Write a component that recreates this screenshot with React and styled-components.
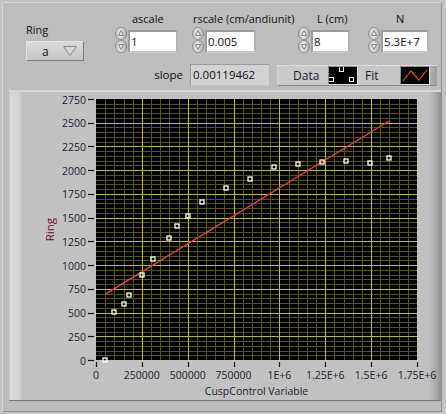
import React from "react";
import styled, { createGlobalStyle } from "styled-components";

const GlobalStyle = createGlobalStyle`
  html, body { margin: 0; padding: 0; background: #bdbdbd; }
  body {
    font-family: "Open Sans", "Noto Sans", sans-serif;
    font-size: 11px;
    color: #111;
  }
`;

// outer window
const Panel = styled.div`
  width: 446px;
  height: 414px;
  box-sizing: border-box;
  padding: 2px 4px 2px 2px;
  background: #c4c4c4;
`;

const Frame = styled.div`
  height: 100%;
  box-sizing: border-box;
  border: 1px solid;
  border-color: #d6d6d6 #8e8e8e #8e8e8e #d6d6d6;
  background: #bdbdbd;
  display: flex;
  flex-direction: column;
`;

// top controls
const ControlsRow = styled.div`
  display: flex;
  align-items: flex-start;
  height: 58px;
  flex: none;
`;

const RingGroup = styled.div`
  flex: none;
  margin: 19px 0 0 23px;
  width: 58px;
`;

const Label = styled.div`
  height: 16px;
  line-height: 16px;
  white-space: nowrap;
  padding-left: ${(p) => p.$indent || 0}px;
`;

const Dropdown = styled.div`
  margin-top: 3px;
  height: 20px;
  box-sizing: border-box;
  border: 1px solid;
  border-color: #e6e6e6 #7c7c7c #7c7c7c #e2e2e2;
  background: linear-gradient(#d9d9d9, #c6c6c6);
  display: flex;
  align-items: center;
  padding-left: 15px;
  font-size: 12px;
  svg { margin-left: 14px; }
`;

const NumGroup = styled.div`
  flex: none;
  width: ${(p) => p.$w}px;
  margin: 8px 0 0 ${(p) => p.$gap}px;
  display: flex;
  flex-direction: column;
`;

const ControlLine = styled.div`
  display: flex;
  align-items: flex-end;
  gap: 1px;
`;

const NumBox = styled.div`
  width: ${(p) => p.$w}px;
  height: 23px;
  box-sizing: border-box;
  border: 2px solid;
  border-color: #9c9c9c #b4b4b4 #c8c8c8 #9c9c9c;
  background: #fff;
  padding-left: 1px;
  line-height: 19px;
  font-size: 11.5px;
  white-space: nowrap;
  overflow: hidden;
`;

const SecondRow = styled.div`
  display: flex;
  align-items: flex-start;
  height: 25px;
  flex: none;
`;

const SlopeLabel = styled.div`
  flex: none;
  margin: 3px 0 0 140px;
  width: 40px;
  text-align: right;
  line-height: 22px;
  font-size: 11.5px;
`;

const Indicator = styled.div`
  flex: none;
  margin: 3px 0 0 7px;
  width: 80px;
  height: 22px;
  box-sizing: border-box;
  border: 1px solid;
  border-color: #9a9a9a #b8b8b8 #c6c6c6 #9a9a9a;
  background: #d2d2d2;
  padding-left: 2px;
  line-height: 20px;
  font-size: 11.5px;
`;

const Legend = styled.div`
  flex: none;
  margin: 4px 0 0 7px;
  width: 160px;
  height: 21px;
  box-sizing: border-box;
  border-top: 1px solid #dedede;
  border-left: 1px solid #d6d6d6;
  border-bottom: 1px solid #8a8a8a;
  background: linear-gradient(to right, #cbcbcb, #c3c3c3 92%, #9c9c9c);
  display: flex;
  align-items: center;
  padding-left: 15px;
`;

const LegendText = styled.div`
  width: ${(p) => p.$w}px;
  box-sizing: border-box;
  padding-left: ${(p) => p.$indent || 0}px;
  font-size: 12px;
  color: #1a1a30;
`;

const Swatch = styled.svg`
  display: block;
  flex: none;
  background: #000;
  border: 1px solid #8a8a8a;
  border-right-color: #e0e0e0;
  border-bottom-color: #e0e0e0;
`;

// graph
const GraphFrame = styled.div`
  margin: 4px 0 0 6px;
  height: 311px;
  box-sizing: border-box;
  border-top: 2px solid #d8d8d8;
  border-bottom: 1px solid #7a7a7a;
  background: linear-gradient(
    to right,
    #c6c6c6 0px,
    #dadada 2px,
    #d3d3d3 10px,
    #c2c2c2 13px,
    #c1c1c1 calc(100% - 12px),
    #a8a8a8 calc(100% - 5px),
    #909090 100%
  );
  display: grid;
  grid-template-columns: 49px 1fr;
  grid-template-rows: 292px 15px;
`;

const YTitle = styled.div`
  display: flex;
  justify-content: flex-end;
  align-items: center;
  padding: 7px 1px 24px 0;
  span {
    writing-mode: vertical-rl;
    transform: rotate(180deg);
    font-size: 11.5px;
    color: #5e1024;
  }
`;

const XTitle = styled.div`
  grid-column: 2;
  margin-left: 38px;
  width: 321px;
  text-align: center;
  line-height: 15px;
  font-size: 10.5px;
  color: #1a1a30;
`;

const X_MAX = 1750000;
const Y_MAX = 2750;
const PX = 38;
const PY = 7;
const PW = 321;
const PH = 261;
const sx = (v) => PX + (v / X_MAX) * PW;
const sy = (v) => PY + PH - (v / Y_MAX) * PH;
const crisp = (n) => Math.round(n) + 0.5;

const points = [
  [50000, 0], [100000, 510], [150000, 590], [180000, 680],
  [250000, 900], [310000, 1060], [400000, 1290], [440000, 1410],
  [500000, 1520], [580000, 1660], [710000, 1810], [840000, 1910],
  [970000, 2030], [1100000, 2070], [1230000, 2090], [1365000, 2100],
  [1495000, 2080], [1600000, 2125],
];
const fit = [[51000, 695], [1600000, 2521]];

const xLabels = ["0", "250000", "500000", "750000", "1E+6", "1.25E+6", "1.5E+6", "1.75E+6"];

function Spinner() {
  return (
    <svg width="12" height="26" viewBox="0 0 12 26" style={{ flex: "none" }}>
      <defs>
        <linearGradient id="spin" x1="0" x2="1">
          <stop offset="0" stopColor="#bdbdbd" />
          <stop offset="0.45" stopColor="#e6e6e6" />
          <stop offset="1" stopColor="#a9a9a9" />
        </linearGradient>
      </defs>
      <rect x="0.5" y="0.5" width="11" height="12" rx="5.5" fill="url(#spin)" stroke="#8e8e8e" />
      <rect x="0.5" y="13.5" width="11" height="12" rx="5.5" fill="url(#spin)" stroke="#8e8e8e" />
      <path d="M6 3.5 L3.5 8.5 H8.5 Z" fill="#e8e8e8" stroke="#7e7e7e" strokeWidth="0.9" />
      <path d="M3.5 17.5 H8.5 L6 22.5 Z" fill="#e8e8e8" stroke="#7e7e7e" strokeWidth="0.9" />
    </svg>
  );
}

function NumericControl({ label, indent, gap, width, value }) {
  return (
    <NumGroup $gap={gap} $w={width + 13}>
      <Label $indent={indent}>{label}</Label>
      <ControlLine>
        <Spinner />
        <NumBox $w={width}>{value}</NumBox>
      </ControlLine>
    </NumGroup>
  );
}

function Chart() {
  const minorX = [];
  for (let v = 50000; v < X_MAX; v += 50000) if (v % 250000) minorX.push(v);
  const minorY = [];
  for (let v = 50; v < Y_MAX; v += 50) if (v % 250) minorY.push(v);
  const majorX = xLabels.map((_, i) => i * 250000);
  const majorY = [];
  for (let v = 0; v <= Y_MAX; v += 250) majorY.push(v);

  return (
    <svg width="382" height="292" viewBox="0 0 382 292" style={{ display: "block" }}>
      <rect x={PX} y={PY} width={PW} height={PH} fill="#000" />
      {minorX.map((v) => (
        <line key={"mx" + v} x1={crisp(sx(v))} x2={crisp(sx(v))} y1={PY} y2={PY + PH} stroke="#56560f" />
      ))}
      {minorY.map((v) => (
        <line key={"my" + v} x1={PX} x2={PX + PW} y1={crisp(sy(v))} y2={crisp(sy(v))} stroke="#56560f" />
      ))}
      {majorX.slice(1, -1).map((v) => (
        <line key={"Mx" + v} x1={crisp(sx(v))} x2={crisp(sx(v))} y1={PY} y2={PY + PH} stroke="#c3c300" />
      ))}
      {majorY.slice(1, -1).map((v) => (
        <line key={"My" + v} x1={PX} x2={PX + PW} y1={crisp(sy(v))} y2={crisp(sy(v))} stroke="#c3c300" />
      ))}

      <polyline
        points={fit.map(([x, y]) => `${sx(x)},${sy(y)}`).join(" ")}
        fill="none"
        stroke="#ee4040"
        strokeWidth="1.4"
      />
      {points.map(([x, y], i) => (
        <rect
          key={i}
          x={Math.round(sx(x)) - 2}
          y={Math.round(sy(y)) - 2}
          width="4"
          height="4"
          fill="none"
          stroke="#fff"
          strokeWidth="1.3"
        />
      ))}

      <g fontFamily='"Open Sans", "Noto Sans", sans-serif' fontSize="10.5" fill="#1a1a30">
        {majorY.map((v) => (
          <g key={"ty" + v}>
            <line x1="30" x2="36" y1={crisp(sy(v))} y2={crisp(sy(v))} stroke="#111" strokeWidth="1.2" />
            <text x="28" y={sy(v) + 4.5} textAnchor="end">{v}</text>
          </g>
        ))}
        {majorX.map((v, i) => (
          <g key={"tx" + v}>
            <line x1={crisp(sx(v))} x2={crisp(sx(v))} y1="270" y2="275" stroke="#111" strokeWidth="1.2" />
            <text x={sx(v)} y="287" textAnchor="middle">{xLabels[i]}</text>
          </g>
        ))}
      </g>
    </svg>
  );
}

export default function App() {
  return (
    <>
      <GlobalStyle />
      <Panel>
        <Frame>
          <ControlsRow>
            <RingGroup>
              <Label>Ring</Label>
              <Dropdown>
                a
                <svg width="14" height="10" viewBox="0 0 14 10">
                  <path d="M0.5 0.5 H13.5 L7 9.5 Z" fill="#d6d6d6" stroke="#8a8a8a" />
                </svg>
              </Dropdown>
            </RingGroup>
            <NumericControl label="ascale" indent={17} gap={31} width={50} value="1" />
            <NumericControl label="rscale (cm/andiunit)" indent={1} gap={14} width={51} value="0.005" />
            <NumericControl label="L (cm)" indent={19} gap={42} width={39} value="8" />
            <NumericControl label="N" indent={28} gap={18} width={48} value="5.3E+7" />
          </ControlsRow>
          <SecondRow>
            <SlopeLabel>slope</SlopeLabel>
            <Indicator>0.00119462</Indicator>
            <Legend>
              <LegendText $w={35}>Data</LegendText>
              <Swatch width="28" height="17" viewBox="0 0 28 17">
                <rect x="10.5" y="-1" width="4" height="5.5" fill="none" stroke="#fff" />
                <rect x="-1" y="10.5" width="5.5" height="4" fill="none" stroke="#fff" />
                <rect x="20.5" y="10.5" width="4" height="4" fill="none" stroke="#fff" />
              </Swatch>
              <LegendText $w={42} $indent={7}>Fit</LegendText>
              <Swatch width="28" height="17" viewBox="0 0 28 17">
                <polyline points="2,14 10,4 18,13 26,3" fill="none" stroke="#ee4040" strokeWidth="1.2" />
              </Swatch>
            </Legend>
          </SecondRow>
          <GraphFrame>
            <YTitle>
              <span>Ring</span>
            </YTitle>
            <Chart />
            <XTitle>CuspControl Variable</XTitle>
          </GraphFrame>
        </Frame>
      </Panel>
    </>
  );
}
